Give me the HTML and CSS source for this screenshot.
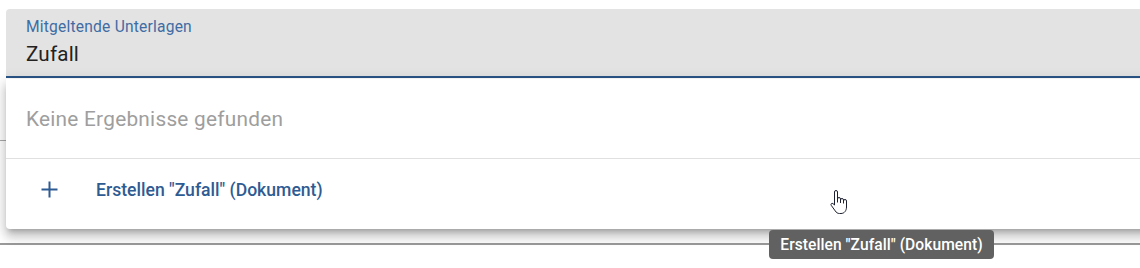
FILE: index.html
```html
<!DOCTYPE html>
<html lang="de">
<head>
<meta charset="utf-8">
<title>Mitgeltende Unterlagen</title>
<link rel="stylesheet" href="styles.css">
</head>
<body>
<div class="page">
  <div class="field">
    <div class="label">Mitgeltende Unterlagen</div>
    <div class="value">Zufall</div>
  </div>
  <div class="under under-a"></div>
  <div class="under under-b"></div>

  <div class="panel">
    <div class="empty">Keine Ergebnisse gefunden</div>
    <div class="create">
      <svg class="plus" width="17" height="17" viewBox="0 0 17 17" aria-hidden="true">
        <path d="M8.5 0.5V16.5M0.5 8.5H16.5" stroke="#2f5b93" stroke-width="2" fill="none"/>
      </svg>
      <span class="create-text">Erstellen "Zufall" (Dokument)</span>
    </div>
  </div>

  <svg class="cursor" width="20" height="26" viewBox="0 0 20 26" aria-hidden="true">
    <path d="M5.5 13V3a1.5 1.5 0 0 1 3 0V10a1.5 1.5 0 0 1 3 0V11a1.5 1.5 0 0 1 3 0V12a1.5 1.5 0 0 1 3 0V18c0 3.5-2 6.5-5.5 6.5H10.5c-2 0-3.2-1-4.2-2.5L2.2 16.3c-0.8-1.2 0.6-2.6 1.8-1.7L5.5 16Z" fill="#fff" stroke="#1e2230" stroke-width="1" stroke-linejoin="round"/>
    <path d="M8.5 10v3.5M11.5 11v3M14.5 12v2.5" stroke="#1e2230" stroke-width="1" fill="none"/>
  </svg>

  <div class="tooltip">Erstellen "Zufall" (Dokument)</div>
</div>
</body>
</html>
```

FILE: styles.css
```css
html, body {
  margin: 0;
  padding: 0;
  background: #ffffff;
}

body {
  font-family: Roboto, "Liberation Sans", Arial, sans-serif;
  width: 1140px;
  height: 268px;
  overflow: hidden;
}

.page {
  position: relative;
  height: 268px;
  padding-top: 9px;
  box-sizing: border-box;
}

.field {
  margin-left: 6px;
  width: 1150px;
  height: 67px;
  background: #e3e3e3;
  border-radius: 4px 4px 0 0;
  border-bottom: 2px solid #2a5587;
  box-sizing: content-box;
  padding: 0 20px;
  display: flex;
  flex-direction: column;
}

.label {
  margin-top: 9px;
  font-size: 15.6px;
  line-height: 18px;
  color: #3f6ca3;
  letter-spacing: 0.2px;
}

.value {
  margin-top: 4px;
  font-size: 20.6px;
  line-height: 28px;
  color: #222222;
  letter-spacing: 0.2px;
}

.under {
  border-bottom: 1px solid #a9a9a9;
}

.under-a {
  height: 62px;
}

.under-b {
  height: 102px;
  border-bottom: 2px solid #9a9a9a;
}

.panel {
  position: absolute;
  top: 79px;
  left: 6px;
  width: 1160px;
  height: 150px;
  background: #ffffff;
  border-radius: 0 0 4px 4px;
  box-shadow: 0 5px 5px -3px rgba(0, 0, 0, 0.2), 0 8px 10px 1px rgba(0, 0, 0, 0.14), 0 3px 14px 2px rgba(0, 0, 0, 0.12);
  display: flex;
  flex-direction: column;
}

.empty {
  height: 80px;
  box-sizing: border-box;
  border-bottom: 1px solid #e0e0e0;
  padding-left: 20px;
  display: flex;
  align-items: center;
  font-size: 20.8px;
  color: #9e9e9e;
  letter-spacing: 0.25px;
}

.create {
  flex: 1;
  display: flex;
  align-items: center;
  padding-left: 35px;
  padding-bottom: 9px;
}

.plus {
  flex: none;
  margin-right: 38px;
}

.create-text {
  font-size: 17.6px;
  font-weight: 500;
  color: #2f5b93;
}

.cursor {
  position: absolute;
  left: 829px;
  top: 189px;
}

.tooltip {
  position: absolute;
  left: 769px;
  top: 230px;
  width: 225px;
  height: 29px;
  box-sizing: border-box;
  background: #616161;
  border-radius: 4px;
  color: #ffffff;
  font-size: 15.6px;
  font-weight: 500;
  letter-spacing: 0.05px;
  display: flex;
  align-items: center;
  justify-content: center;
}
```
